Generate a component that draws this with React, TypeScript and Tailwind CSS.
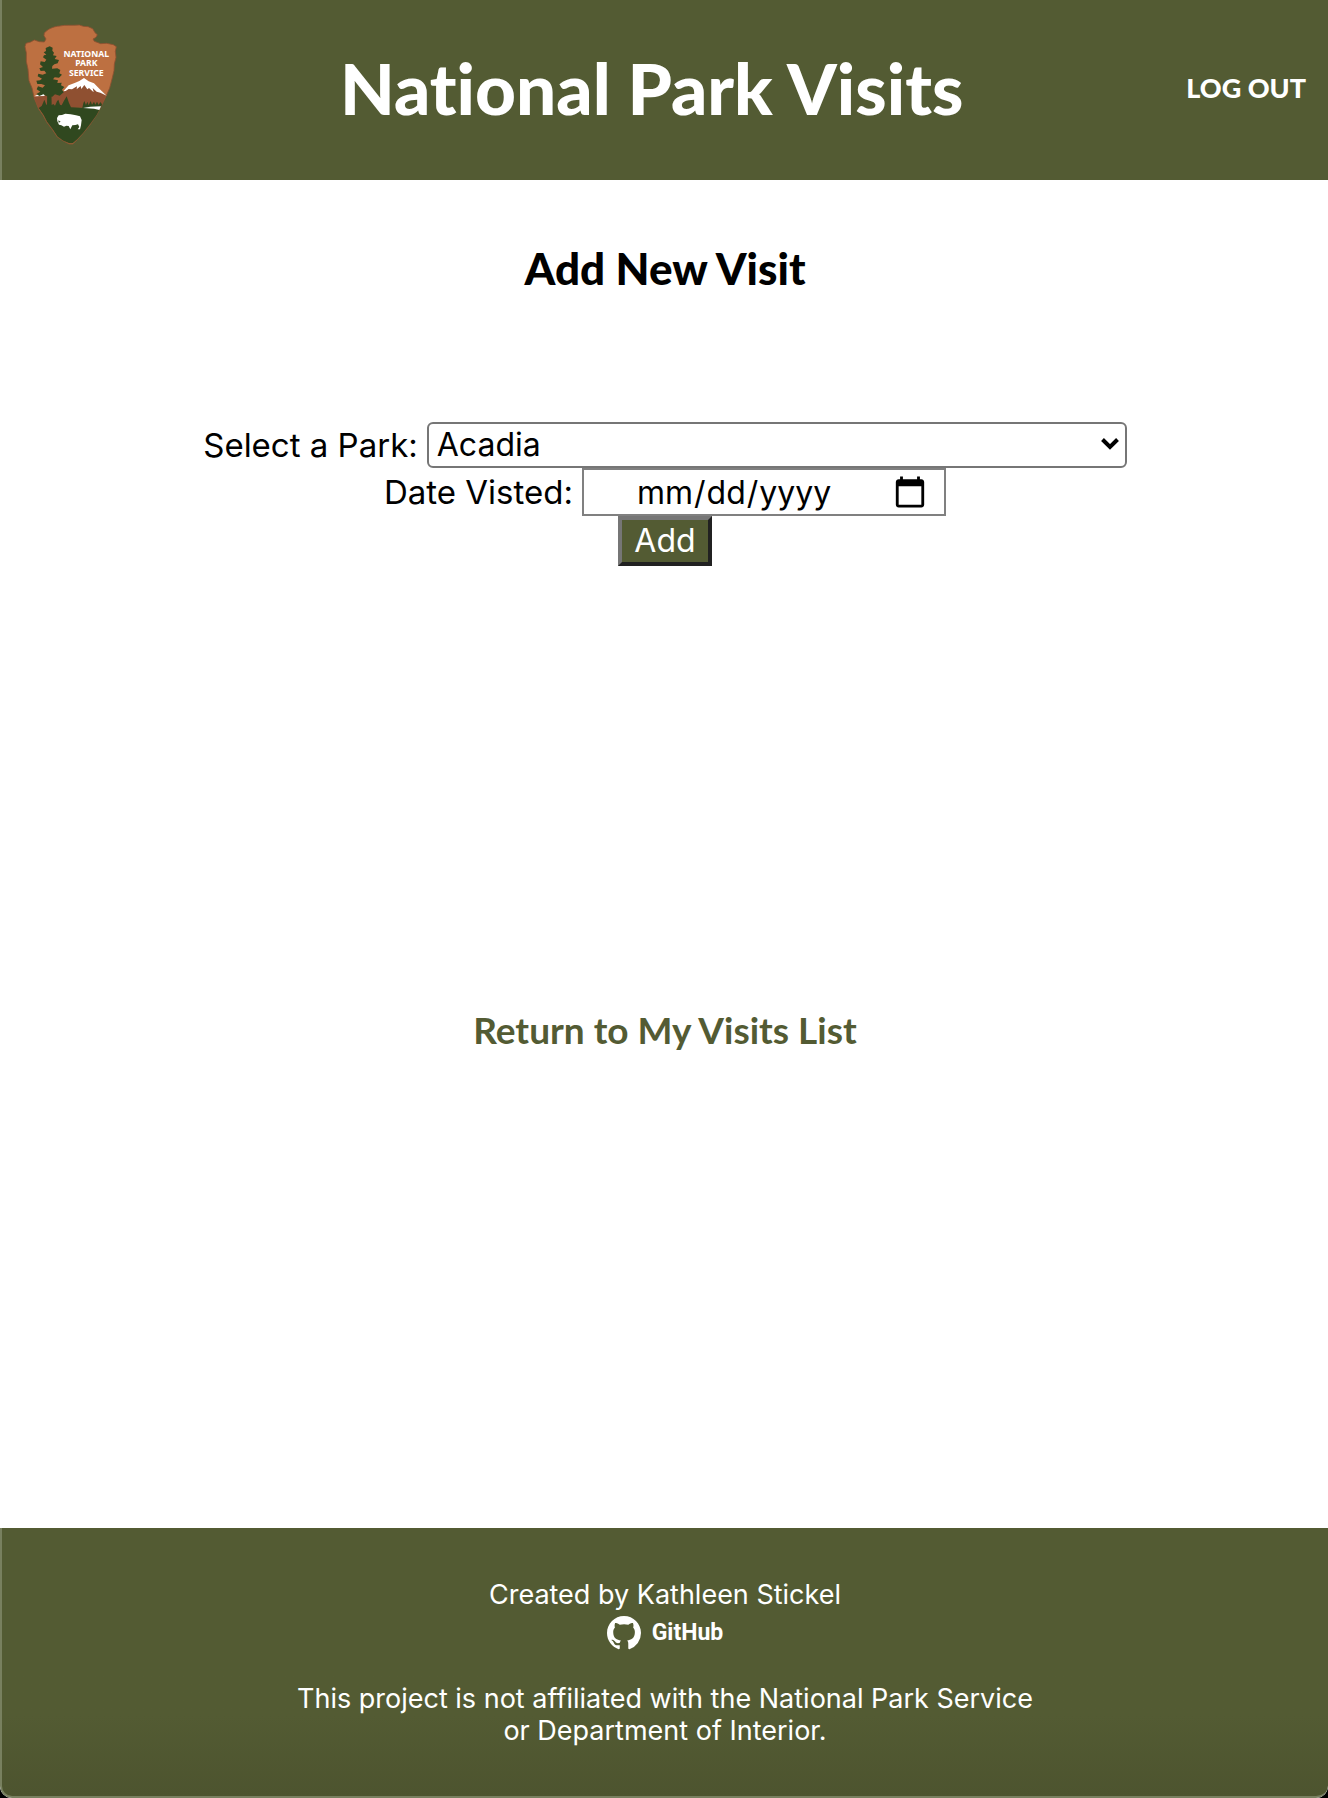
import type { ReactNode } from "react";

const parks = ["Acadia", "Arches", "Badlands", "Big Bend", "Biscayne", "Bryce Canyon", "Yellowstone", "Yosemite", "Zion"];

function ParkServiceLogo() {
  return (
    <svg viewBox="70 70 279 363" className="h-[121px] w-[93px] self-start" role="img" aria-label="National Park Service">
      <path
        d="M131 97 C140 86 158 77 178 76 C194 72 212 75 236 73 L248 77 L262 78 L276 84 L283 96 L290 102 L286 110 L277 115 L281 122 L300 129 L318 128 L338 132 L347 138 L344 152 L346 170 L341 190 L340 210 L334 235 L327 262 L316 287 L302 316 L288 343 L268 372 L248 397 L230 417 L216 430 L206 430 L188 421 L170 409 L156 388 L138 364 L128 345 L114 325 L101 293 L94 262 L85 240 L82 205 L77 182 L77 156 L73 138 L76 128 L90 124 L101 118 L116 123 L131 124 L136 115 L130 105 Z"
        fill="#bd7041"
        stroke="#8f5030"
        strokeWidth="2.5"
        strokeLinejoin="round"
      />
      <path d="M99 288 L130 284 L160 272 L188 272 L210 256 L250 236 L290 262 L317 284 L300 320 L114 324 Z" fill="#8f5031" />
      <path
        d="M188 272 L204 254 L222 247 L236 241 L250 232 L264 242 L280 248 L296 264 L318 285 L299 276 L288 273 L276 262 L279 275 L265 262 L260 266 L251 253 L242 265 L240 256 L228 266 L229 257 L214 266 L204 265 L195 271 Z"
        fill="#fff"
      />
      <path d="M101 287 L114 280 L130 279 L132 286 Z M153 270 L165 266 L168 271 Z" fill="#fff" />
      <path
        d="M114 322 L123 316 L128 305 L131 297 L136 310 L139 314 L142 150 L150 150 L153 313 L158 310 L163 315 L169 302 L173 297 L178 312 L183 314 L190 300 L198 287 L205 307 L211 320 L245 321 L248 308 L251 301 L256 313 L260 303 L264 314 L270 301 L274 312 L280 303 L284 312 L289 303 L294 313 L299 304 L304 311 L302 316 L288 343 L268 371 L248 396 L230 416 L216 428 L206 428 L188 420 L171 408 L157 387 L139 363 L129 344 Z"
        fill="#30481f"
      />
      <path
        d="M147 137 L156 141 L155 150 L160 156 L157 164 L168 166 L162 175 L175 178 L171 188 L161 191 L155 196 L154 204 L170 203 L179 208 L176 218 L184 222 L175 231 L162 230 L157 236 L172 239 L170 247 L183 246 L181 254 L191 259 L184 267 L189 275 L177 285 L163 281 L155 288 L139 287 L128 281 L116 286 L107 280 L119 273 L108 266 L112 257 L126 261 L133 254 L122 250 L110 250 L107 240 L118 239 L124 234 L111 227 L113 219 L126 222 L137 218 L131 210 L120 211 L116 203 L127 199 L118 191 L120 182 L132 184 L137 177 L127 170 L130 164 L137 162 L129 155 L136 151 L135 142 Z"
        fill="#30481f"
      />
      <path d="M247 322 L269 318 L301 317 L296 328 L280 324 Z" fill="#fff" />
      <path
        d="M169 352 L174 344 L184 343 L194 339 L210 341 L226 344 L238 347 L243 358 L241 374 L238 386 L231 386 L236 379 L232 371 L224 373 L215 374 L209 386 L204 376 L197 375 L190 378 L182 374 L175 372 L170 362 Z"
        fill="#fff"
      />
      <path d="M173 359 L180 363 L174 366 Z" fill="#30481f" />
      <g fill="#fff" fontFamily="'Noto Sans', 'Open Sans', sans-serif" fontWeight="700" fontSize="26" textAnchor="middle">
        <text x="257" y="170">NATIONAL</text>
        <text x="257" y="197">PARK</text>
        <text x="257" y="225">SERVICE</text>
      </g>
    </svg>
  );
}

function GitHubMark() {
  return (
    <svg viewBox="0 0 16 16" className="size-[34px]" fill="currentColor" aria-hidden="true">
      <path d="M8 0C3.58 0 0 3.58 0 8c0 3.54 2.29 6.53 5.47 7.59.4.07.55-.17.55-.38 0-.19-.01-.82-.01-1.49-2.01.37-2.53-.49-2.69-.94-.09-.23-.48-.94-.82-1.13-.28-.15-.68-.52-.01-.53.63-.01 1.08.58 1.23.82.72 1.21 1.87.87 2.33.66.07-.52.28-.87.51-1.07-1.78-.2-3.64-.89-3.64-3.95 0-.87.31-1.59.82-2.15-.08-.2-.36-1.02.08-2.12 0 0 .67-.21 2.2.82.64-.18 1.32-.27 2-.27s1.36.09 2 .27c1.53-1.04 2.2-.82 2.2-.82.44 1.1.16 1.92.08 2.12.51.56.82 1.27.82 2.15 0 3.07-1.87 3.75-3.65 3.95.29.25.54.73.54 1.48v2.2c0 .21.15.46.55.38A8.01 8.01 0 0 0 16 8c0-4.42-3.58-8-8-8Z" />
    </svg>
  );
}

function Field({ id, label, children }: { id: string; label: string; children: ReactNode }) {
  return (
    <div className="flex items-center gap-[9px]">
      <label htmlFor={id} className="whitespace-nowrap leading-[46px]">
        {label}
      </label>
      {children}
    </div>
  );
}

export default function App() {
  return (
    <div className="bg-black">
      <div className="flex min-h-screen flex-col overflow-hidden rounded-b-xl bg-white font-['Inter',sans-serif] text-black">
        <header className="flex items-center justify-between border-l-2 border-[#78805f] bg-[#535b33] px-[22px] pt-6 pb-7 font-['Lato',sans-serif] font-black text-white">
          <ParkServiceLogo />
          <h1 className="text-[71px] leading-[128px] [font-variant-ligatures:none]">National Park Visits</h1>
          <a href="#logout" className="text-[27px] leading-10">
            LOG OUT
          </a>
        </header>

        <main className="flex flex-1 flex-col items-center pl-0.5">
          <h2 className="mt-[58px] font-['Lato',sans-serif] text-[44px] leading-[60px] font-black">Add New Visit</h2>

          <form className="mt-[124px] flex flex-col items-center text-[33px]" onSubmit={(e) => e.preventDefault()}>
            <Field id="park" label="Select a Park:">
              <div className="relative">
                <select
                  id="park"
                  className="block h-[46px] w-[700px] appearance-none rounded-md border-2 border-[#767676] bg-white pl-2 text-[32px] leading-9"
                >
                  {parks.map((park) => (
                    <option key={park}>{park}</option>
                  ))}
                </select>
                <svg viewBox="0 0 18 12" className="pointer-events-none absolute top-4 right-2 h-3 w-[18px]" fill="none" stroke="#000" strokeWidth="4" aria-hidden="true">
                  <path d="M1.5 1.5 L9 9 L16.5 1.5" />
                </svg>
              </div>
            </Field>
            <Field id="date" label="Date Visted:">
              <input
                id="date"
                type="date"
                className="block h-12 w-[364px] border-2 border-[#808080] bg-white pt-0.5 pr-4 pl-[52px] text-[32px] leading-9 [&::-webkit-calendar-picker-indicator]:m-0 [&::-webkit-calendar-picker-indicator]:size-9 [&::-webkit-calendar-picker-indicator]:p-0"
              />
            </Field>
            <button type="submit" className="h-[50px] w-[94px] border-4 border-t-[#767676] border-r-[#212121] border-b-[#212121] border-l-[#767676] bg-[#535b33] text-[32px] leading-9 text-white">
              Add
            </button>
          </form>

          <a href="#visits" className="mt-[440px] font-['Lato',sans-serif] text-[37px] leading-[48px] font-bold text-[#535b33]">
            Return to My Visits List
          </a>
        </main>

        <footer className="flex h-[270px] flex-col items-center rounded-b-xl border-b-2 border-l-2 border-[#78805f] bg-linear-to-b from-[#535b33] from-70% to-[#4d542f] pt-[51px] text-center text-[27px] leading-8 text-white">
          <p>Created by Kathleen Stickel</p>
          <a href="#github" className="mt-1 flex items-center gap-[11px] pt-px font-['Roboto',sans-serif] text-[23px] font-bold">
            <GitHubMark />
            GitHub
          </a>
          <p className="mt-[33px] max-w-[800px]">
            This project is not affiliated with the National Park Service
            <br />
            or Department of Interior.
          </p>
        </footer>
      </div>
    </div>
  );
}
